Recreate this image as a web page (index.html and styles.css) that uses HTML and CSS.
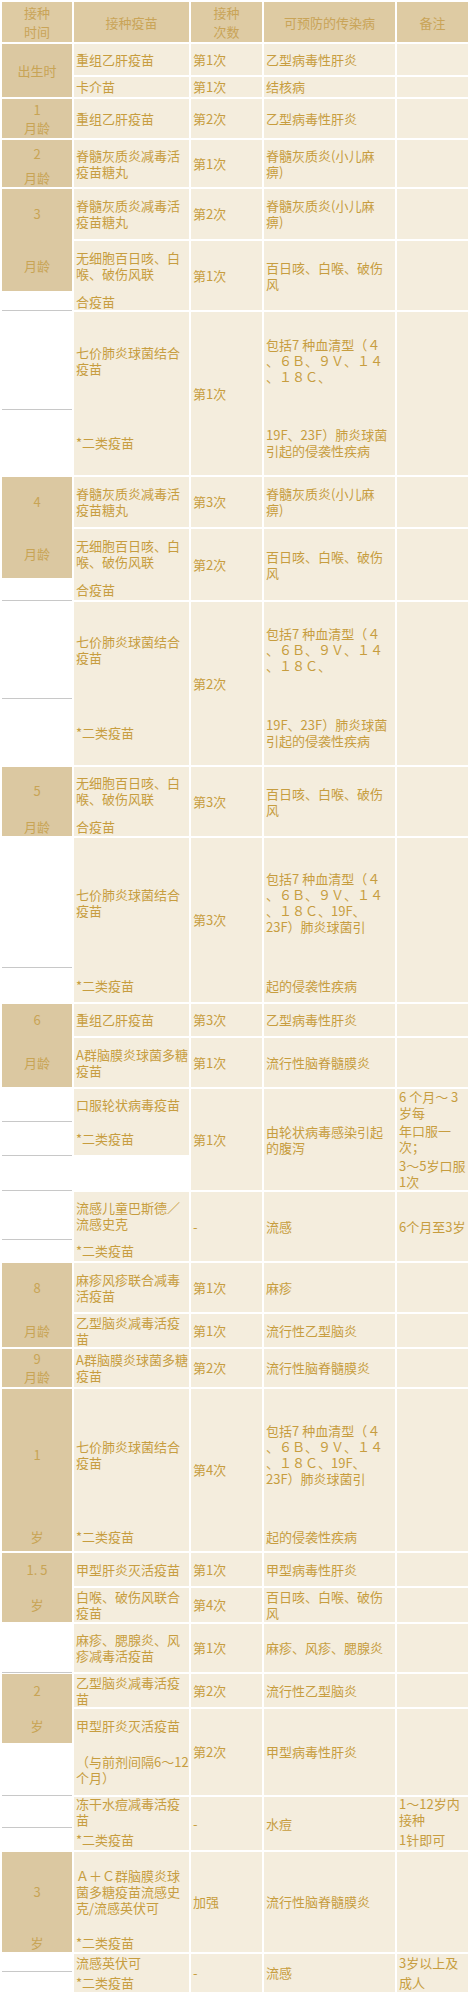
FILE: index.html
```html
<!DOCTYPE html>
<html lang="zh-CN">
<head>
<meta charset="utf-8">
<title>儿童免疫接种时间表</title>
<link rel="stylesheet" href="styles.css">
</head>
<body>
<div class="schedule">
  <div class="hd">接种<br>时间</div>
  <div class="hd">接种疫苗</div>
  <div class="hd">接种<br>次数</div>
  <div class="hd">可预防的传染病</div>
  <div class="hd">备注</div>

  <!-- 出生时 -->
  <div class="age r2">出生时</div>
  <div class="cell">重组乙肝疫苗</div>
  <div class="cell">第1次</div>
  <div class="cell">乙型病毒性肝炎</div>
  <div class="cell"></div>
  <div class="cell">卡介苗</div>
  <div class="cell">第1次</div>
  <div class="cell">结核病</div>
  <div class="cell"></div>

  <!-- 1月龄 -->
  <div class="age lab"><span>1</span><span>月龄</span></div>
  <div class="cell">重组乙肝疫苗</div>
  <div class="cell">第2次</div>
  <div class="cell">乙型病毒性肝炎</div>
  <div class="cell"></div>

  <!-- 2月龄 -->
  <div class="age lab wide"><span>2</span><span>月龄</span></div>
  <div class="cell">脊髓灰质炎减毒活<br>疫苗糖丸</div>
  <div class="cell">第1次</div>
  <div class="cell">脊髓灰质炎(小儿麻<br>痹)</div>
  <div class="cell"></div>

  <!-- 3月龄 -->
  <div class="age join">3</div>
  <div class="cell">脊髓灰质炎减毒活<br>疫苗糖丸</div>
  <div class="cell">第2次</div>
  <div class="cell">脊髓灰质炎(小儿麻<br>痹)</div>
  <div class="cell"></div>
  <div class="age">月龄</div>
  <div class="cell join">无细胞百日咳、白<br>喉、破伤风联</div>
  <div class="cell r2">第1次</div>
  <div class="cell r2">百日咳、白喉、破伤<br>风</div>
  <div class="cell r2"></div>
  <div class="blank rule"></div>
  <div class="cell">合疫苗</div>
  <div class="blank rule"></div>
  <div class="cell join">七价肺炎球菌结合<br>疫苗</div>
  <div class="cell r2">第1次</div>
  <div class="cell join">包括7 种血清型（４<br>、６Ｂ、９Ｖ、１４<br>、１８Ｃ、</div>
  <div class="cell r2"></div>
  <div class="blank"></div>
  <div class="cell">*二类疫苗</div>
  <div class="cell">19F、23F）肺炎球菌<br>引起的侵袭性疾病</div>

  <!-- 4月龄 -->
  <div class="age join">4</div>
  <div class="cell">脊髓灰质炎减毒活<br>疫苗糖丸</div>
  <div class="cell">第3次</div>
  <div class="cell">脊髓灰质炎(小儿麻<br>痹)</div>
  <div class="cell"></div>
  <div class="age">月龄</div>
  <div class="cell join">无细胞百日咳、白<br>喉、破伤风联</div>
  <div class="cell r2">第2次</div>
  <div class="cell r2">百日咳、白喉、破伤<br>风</div>
  <div class="cell r2"></div>
  <div class="blank rule"></div>
  <div class="cell">合疫苗</div>
  <div class="blank rule"></div>
  <div class="cell join">七价肺炎球菌结合<br>疫苗</div>
  <div class="cell r2">第2次</div>
  <div class="cell join">包括7 种血清型（４<br>、６Ｂ、９Ｖ、１４<br>、１８Ｃ、</div>
  <div class="cell r2"></div>
  <div class="blank"></div>
  <div class="cell">*二类疫苗</div>
  <div class="cell">19F、23F）肺炎球菌<br>引起的侵袭性疾病</div>

  <!-- 5月龄 -->
  <div class="age join">5</div>
  <div class="cell join">无细胞百日咳、白<br>喉、破伤风联</div>
  <div class="cell r2">第3次</div>
  <div class="cell r2">百日咳、白喉、破伤<br>风</div>
  <div class="cell r2"></div>
  <div class="age">月龄</div>
  <div class="cell">合疫苗</div>
  <div class="blank rule"></div>
  <div class="cell join">七价肺炎球菌结合<br>疫苗</div>
  <div class="cell r2">第3次</div>
  <div class="cell join">包括7 种血清型（４<br>、６Ｂ、９Ｖ、１４<br>、１８Ｃ、19F、<br>23F）肺炎球菌引</div>
  <div class="cell r2"></div>
  <div class="blank"></div>
  <div class="cell">*二类疫苗</div>
  <div class="cell">起的侵袭性疾病</div>

  <!-- 6月龄 -->
  <div class="age join">6</div>
  <div class="cell">重组乙肝疫苗</div>
  <div class="cell">第3次</div>
  <div class="cell">乙型病毒性肝炎</div>
  <div class="cell"></div>
  <div class="age">月龄</div>
  <div class="cell">A群脑膜炎球菌多糖<br>疫苗</div>
  <div class="cell">第1次</div>
  <div class="cell">流行性脑脊髓膜炎</div>
  <div class="cell"></div>
  <div class="blank rule"></div>
  <div class="cell join">口服轮状病毒疫苗</div>
  <div class="cell r3">第1次</div>
  <div class="cell r3">由轮状病毒感染引起<br>的腹泻</div>
  <div class="cell join">6 个月～ 3<br>岁每</div>
  <div class="blank rule"></div>
  <div class="cell">*二类疫苗</div>
  <div class="cell join">年口服一<br>次；</div>
  <div class="blank rule"></div>
  <div class="blank"></div>
  <div class="cell">3～5岁口服<br>1次</div>
  <div class="blank rule"></div>
  <div class="cell join">流感儿童巴斯德／<br>流感史克</div>
  <div class="cell r2">-</div>
  <div class="cell r2">流感</div>
  <div class="cell r2">6个月至3岁</div>
  <div class="blank"></div>
  <div class="cell">*二类疫苗</div>

  <!-- 8月龄 -->
  <div class="age join">8</div>
  <div class="cell">麻疹风疹联合减毒<br>活疫苗</div>
  <div class="cell">第1次</div>
  <div class="cell">麻疹</div>
  <div class="cell"></div>
  <div class="age">月龄</div>
  <div class="cell">乙型脑炎减毒活疫<br>苗</div>
  <div class="cell">第1次</div>
  <div class="cell">流行性乙型脑炎</div>
  <div class="cell"></div>

  <!-- 9月龄 -->
  <div class="age lab"><span>9</span><span>月龄</span></div>
  <div class="cell">A群脑膜炎球菌多糖<br>疫苗</div>
  <div class="cell">第2次</div>
  <div class="cell">流行性脑脊髓膜炎</div>
  <div class="cell"></div>

  <!-- 1岁 -->
  <div class="age join">1</div>
  <div class="cell join">七价肺炎球菌结合<br>疫苗</div>
  <div class="cell r2">第4次</div>
  <div class="cell join">包括7 种血清型（４<br>、６Ｂ、９Ｖ、１４<br>、１８Ｃ、19F、<br>23F）肺炎球菌引</div>
  <div class="cell r2"></div>
  <div class="age">岁</div>
  <div class="cell">*二类疫苗</div>
  <div class="cell">起的侵袭性疾病</div>

  <!-- 1.5岁 -->
  <div class="age join">1. 5</div>
  <div class="cell">甲型肝炎灭活疫苗</div>
  <div class="cell">第1次</div>
  <div class="cell">甲型病毒性肝炎</div>
  <div class="cell"></div>
  <div class="age">岁</div>
  <div class="cell">白喉、破伤风联合<br>疫苗</div>
  <div class="cell">第4次</div>
  <div class="cell">百日咳、白喉、破伤<br>风</div>
  <div class="cell"></div>
  <div class="blank rule"></div>
  <div class="cell">麻疹、腮腺炎、风<br>疹减毒活疫苗</div>
  <div class="cell">第1次</div>
  <div class="cell">麻疹、风疹、腮腺炎</div>
  <div class="cell"></div>

  <!-- 2岁 -->
  <div class="age join">2</div>
  <div class="cell">乙型脑炎减毒活疫<br>苗</div>
  <div class="cell">第2次</div>
  <div class="cell">流行性乙型脑炎</div>
  <div class="cell"></div>
  <div class="age">岁</div>
  <div class="cell join">甲型肝炎灭活疫苗</div>
  <div class="cell r2">第2次</div>
  <div class="cell r2">甲型病毒性肝炎</div>
  <div class="cell r2"></div>
  <div class="blank rule"></div>
  <div class="cell">（与前剂间隔6～12<br>个月）</div>
  <div class="blank rule"></div>
  <div class="cell join">冻干水痘减毒活疫<br>苗</div>
  <div class="cell r2">-</div>
  <div class="cell r2">水痘</div>
  <div class="cell join">1～12岁内<br>接种</div>
  <div class="blank"></div>
  <div class="cell">*二类疫苗</div>
  <div class="cell">1针即可</div>

  <!-- 3岁 -->
  <div class="age join">3</div>
  <div class="cell join">Ａ＋Ｃ群脑膜炎球<br>菌多糖疫苗流感史<br>克/流感英伏可</div>
  <div class="cell r2">加强</div>
  <div class="cell r2">流行性脑脊髓膜炎</div>
  <div class="cell r2"></div>
  <div class="age">岁</div>
  <div class="cell">*二类疫苗</div>
  <div class="blank rule"></div>
  <div class="cell join">流感英伏可</div>
  <div class="cell r2">-</div>
  <div class="cell r2">流感</div>
  <div class="cell join">3岁以上及</div>
  <div class="blank"></div>
  <div class="cell">*二类疫苗</div>
  <div class="cell">成人</div>
</div>
</body>
</html>
```

FILE: styles.css
```css
html, body {
  margin: 0;
  background: #ffffff;
}

.schedule {
  display: grid;
  grid-template-columns: 70px 115px 71px 131px 71px;
  grid-template-rows:
    40px 31px 20px 39px 47px 50px 50px 17px 97px 64px
    50px 49px 20px 96px 65px 48px 19px 129px 33px 32px
    49px 32px 32px 33px 47px 20px 49px 33px 38px 132px
    28px 33px 34px 48px 33px 34px 50px 30px 21px 80px
    18px 17px 19px;
  gap: 2px;
  padding: 2px 0 0 2px;
  width: max-content;
  font-family: "Noto Sans CJK SC", "Noto Sans", sans-serif;
  font-size: 13px;
  line-height: 16px;
  color: #c79d3f;
}

.hd,
.age,
.cell,
.blank {
  display: flex;
  flex-direction: column;
  justify-content: center;
  white-space: nowrap;
  min-width: 0;
}

.hd {
  --bg: #decba3;
  background: var(--bg);
  align-items: center;
  text-align: center;
  line-height: 19px;
  color: #c9a458;
}

.age {
  --bg: #dbc8a1;
  background: var(--bg);
  align-items: center;
  text-align: center;
  color: #c8a455;
}

.cell {
  --bg: #f4eddd;
  background: var(--bg);
  padding: 0 2px;
}

.blank {
  --bg: #ffffff;
  background: var(--bg);
}

.lab {
  gap: 2px;
}

.lab.wide {
  gap: 8px;
  padding-top: 5px;
}

.join {
  box-shadow: 0 2px 0 var(--bg);
}

.rule {
  box-shadow: 0 1px 0 #c8c8c8;
}

.r2 {
  grid-row: span 2;
}

.r3 {
  grid-row: span 3;
}
```
